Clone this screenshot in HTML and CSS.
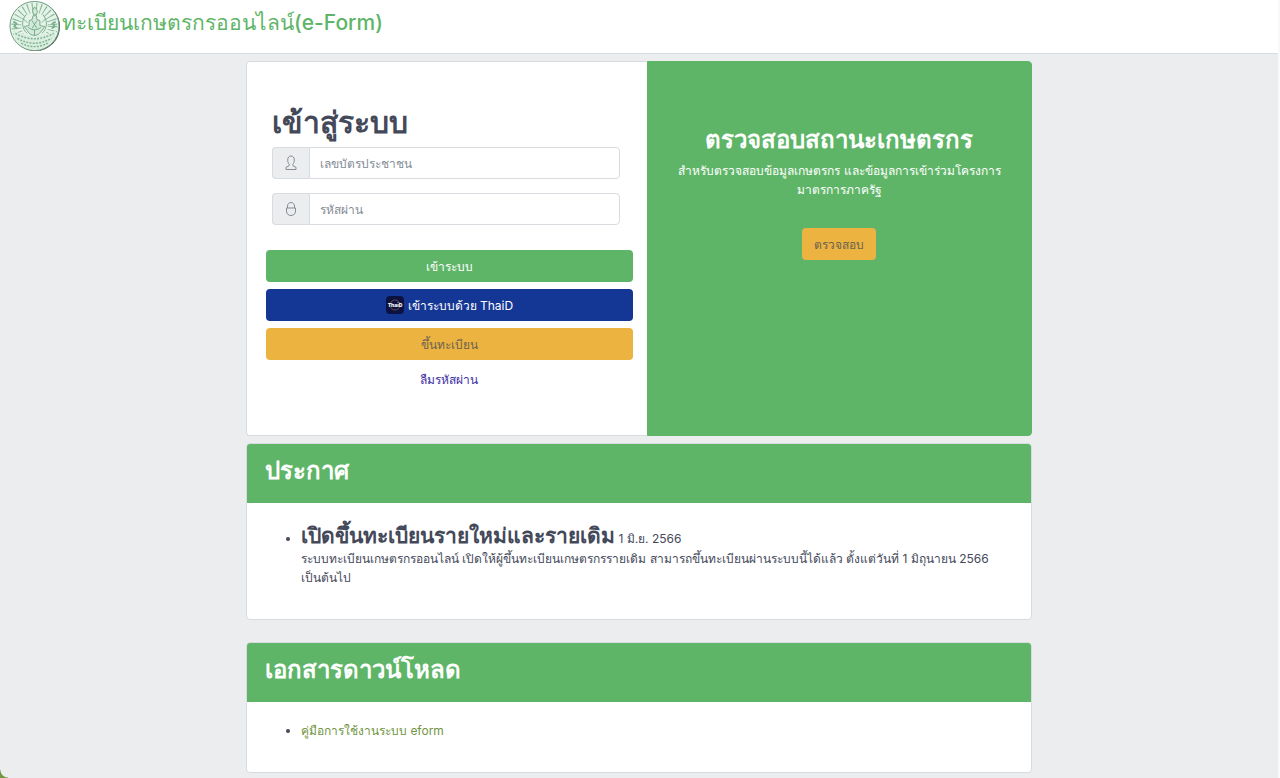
FILE: index.html
```html
<!DOCTYPE html>
<html lang="th">

<head>
    <meta charset="UTF-8">
    <meta name="viewport" content="width=device-width, initial-scale=1.0">
    <title>ทะเบียนเกษตรกรออนไลน์(e-Form)</title>
    <link rel="stylesheet" href="styles.css">
</head>

<body>
    <header class="app-header">
        <a href="/" class="brand">
            <svg class="brand-logo" viewBox="0 0 54 54" aria-hidden="true">
                <circle cx="27.500" cy="27" r="25" fill="#46584d" />
                <circle cx="26.500" cy="26.500" r="25" fill="#e6f3e9" stroke="#6c9a7c" />
                <circle cx="26.500" cy="26.500" r="18.500" fill="none" stroke="#86b896" stroke-width="10" stroke-dasharray="1 3.200" />
                <path d="M4 29c5 5 11 7 22.500 7S44 34 49 29l-2 9c-4 7-11 12-20.500 12S10 45 6 38z" fill="#d9eedf" />
                <path d="M7 34q19 11 39 0M9 39q17 10 35 0M13 44q13 7 27 0" fill="none" stroke="#7fb190" stroke-width="1.500" stroke-dasharray="2 1.300" />
                <g fill="#d3eada" stroke="#6fa582" stroke-width=".9">
                    <path d="M26.500 7l-2 4 1 4h3l1-4z" />
                    <path d="M25 16h3.500l.5 4 3 1v5l5 1-3 4c-2 3-4 5-7.500 5s-6-2-7.500-5l-3-4 5-1v-5l3-1z" />
                    <path d="M18 15c-5 5-5 14 1 19M35 15c5 5 5 14-1 19M20 28q6.500 5 13 0M24 21l5 8M29 21l-5 8M26.500 30v6M15 19l4 4M38 19l-4 4" fill="none" />
                </g>
                <path d="M5 22l3 2-2 3 3 2M48 22l-3 2 2 3-3 2" fill="none" stroke="#7fb190" stroke-width="2" />
            </svg>
            <span>ทะเบียนเกษตรกรออนไลน์(e-Form)</span>
        </a>
    </header>

    <main class="container">
        <div class="card-group">
            <section class="card login">
                <form>
                    <h1>เข้าสู่ระบบ</h1>
                    <div class="input-group">
                        <label for="username" aria-label="เลขบัตรประชาชน">
                            <svg viewBox="0 0 16 16" aria-hidden="true">
                                <path d="M8 1C6 1 4.700 2.500 4.700 5c0 2 .7 3.500 1.600 4.500L5.800 11 3 12.300V14.500h10v-2.200L10.200 11l-.5-1.500c.9-1 1.600-2.500 1.600-4.500C11.300 2.500 10 1 8 1z" />
                            </svg>
                        </label>
                        <input type="text" id="username" placeholder="เลขบัตรประชาชน">
                    </div>
                    <div class="input-group">
                        <label for="password" aria-label="รหัสผ่าน">
                            <svg viewBox="0 0 16 16" aria-hidden="true">
                                <path d="M3.500 7h9v3c0 2.800-2 4.500-4.500 4.500S3.500 12.800 3.500 10zM4.500 7V5C4.500 3 6 1.500 8 1.500S11.500 3 11.500 5v2" />
                            </svg>
                        </label>
                        <input type="password" id="password" placeholder="รหัสผ่าน">
                    </div>
                </form>
                <div class="actions">
                    <button type="button" class="btn btn-success">เข้าระบบ</button>
                    <button type="button" class="btn btn-thaid">
                        <svg viewBox="0 0 18 18" aria-hidden="true">
                            <rect width="18" height="18" rx="4" fill="#0c1240" />
                            <circle cx="9" cy="9" r="5" fill="none" stroke="#8c5a4a" stroke-width=".7" />
                            <text x="9" y="11" text-anchor="middle">ThaiD</text>
                        </svg>
                        <span>เข้าระบบด้วย ThaiD</span>
                    </button>
                    <button type="button" class="btn btn-warning">ขึ้นทะเบียน</button>
                    <a href="#" class="forgot">ลืมรหัสผ่าน</a>
                </div>
            </section>
            <section class="card check">
                <h2>ตรวจสอบสถานะเกษตรกร</h2>
                <p>สำหรับตรวจสอบข้อมูลเกษตรกร และข้อมูลการเข้าร่วมโครงการมาตรการภาครัฐ</p>
                <button type="button" class="btn btn-warning">ตรวจสอบ</button>
            </section>
        </div>

        <section class="card news">
            <div class="card-header">
                <h2>ประกาศ</h2>
            </div>
            <ul>
                <li>
                    <h3>เปิดขึ้นทะเบียนรายใหม่และรายเดิม</h3> 1 มิ.ย. 2566
                    <p>ระบบทะเบียนเกษตรกรออนไลน์ เปิดให้ผู้ขึ้นทะเบียนเกษตรกรรายเดิม สามารถขึ้นทะเบียนผ่านระบบนี้ได้แล้ว ตั้งแต่วันที่ 1 มิถุนายน 2566 เป็นต้นไป</p>
                </li>
            </ul>
        </section>

        <section class="card downloads">
            <div class="card-header">
                <h2>เอกสารดาวน์โหลด</h2>
            </div>
            <ul>
                <li><a href="#">คู่มือการใช้งานระบบ eform</a></li>
            </ul>
        </section>
    </main>
    <div class="corner"></div>
</body>

</html>
```

FILE: styles.css
```css
* {
    box-sizing: border-box;
}

body {
    margin: 0;
    min-height: 100vh;
    background-color: #ebedef;
    border-right: 2px solid #f8f9fa;
    color: #44495a;
    font-family: Inter, "Noto Sans", sans-serif;
    font-size: 12px;
    line-height: 19px;
}

h1,
h2,
h3,
p,
ul {
    margin: 0;
}

a {
    text-decoration: none;
}

.app-header {
    height: 54px;
    padding: 0 8px;
    background-color: #fff;
    border-bottom: 1px solid #d8dbe0;
}

.brand {
    display: flex;
    color: #5eb567;
    font-size: 21px;
    font-weight: 500;
    line-height: 46px;
}

.brand-logo {
    width: 54px;
    height: 53px;
}

.container {
    max-width: 786px;
    margin: 0 auto;
    padding: 7px 0 5px;
}

.card {
    background-color: #fff;
    border: 1px solid #d8dbe0;
    border-radius: 4px;
}

.card-group {
    display: flex;
    min-height: 375px;
    margin-bottom: 7px;
}

.login {
    width: 51%;
    padding: 36px 14px 0 19px;
    border-right: 0;
    border-radius: 4px 0 0 4px;
}

.login form {
    padding: 0 13px 0 6px;
}

.login h1 {
    font-size: 30px;
    font-weight: 600;
    line-height: 49px;
}

.input-group {
    display: flex;
    height: 32px;
    margin-bottom: 14px;
}

.input-group label {
    display: flex;
    align-items: center;
    justify-content: center;
    width: 37px;
    background-color: #ebedef;
    border: 1px solid #d8dbe0;
    border-right: 0;
    border-radius: 4px 0 0 4px;
}

.input-group svg {
    width: 16px;
    height: 16px;
    fill: none;
    stroke: #858c96;
}

.input-group input {
    flex: 1;
    min-width: 0;
    padding: 0 10px;
    border: 1px solid #d8dbe0;
    border-radius: 0 4px 4px 0;
    font: inherit;
}

.input-group input::placeholder {
    color: #858c96;
}

.actions {
    display: flex;
    flex-direction: column;
    gap: 7px;
    margin-top: 25px;
}

.btn {
    display: flex;
    align-items: center;
    justify-content: center;
    gap: 4px;
    height: 32px;
    padding: 0 12px;
    border: 0;
    border-radius: 4px;
    color: #fff;
    font: inherit;
    cursor: pointer;
}

.btn svg {
    width: 18px;
    height: 18px;
}

.btn text {
    fill: #fff;
    font-size: 5px;
    font-weight: 800;
}

.btn-success {
    background-color: #5eb567;
}

.btn-thaid {
    background-color: #143695;
}

.btn-warning {
    background-color: #edb340;
    color: #6b6350;
}

.forgot {
    align-self: center;
    margin-top: 3px;
    color: #3d2ea3;
}

.check {
    display: flex;
    flex: 1;
    flex-direction: column;
    align-items: center;
    padding: 60px 25px 0;
    background-color: #5eb567;
    border-color: #5eb567;
    border-radius: 0 4px 4px 0;
    color: #fff;
    text-align: center;
}

.check h2 {
    margin-bottom: 4px;
    font-size: 24px;
    font-weight: 600;
    line-height: 35px;
}

.check .btn {
    margin-top: 29px;
}

.news {
    margin-bottom: 22px;
}

.card-header {
    height: 59px;
    padding: 0 18px;
    background-color: #5eb567;
    border-radius: 3px 3px 0 0;
    color: #fff;
}

.card-header h2 {
    font-size: 24px;
    font-weight: 600;
    line-height: 53px;
}

.card ul {
    padding: 19px 24px 32px 54px;
}

.news h3 {
    display: inline;
    font-size: 21px;
    font-weight: 600;
    line-height: 27px;
}

.downloads a {
    color: #709440;
}

/* green window edge behind the rounded bottom corner */
.corner {
    position: fixed;
    bottom: 0;
    left: 0;
    width: 8px;
    height: 8px;
    background: radial-gradient(circle at 100% 0, transparent 7px, #76953f 8px);
}
```
